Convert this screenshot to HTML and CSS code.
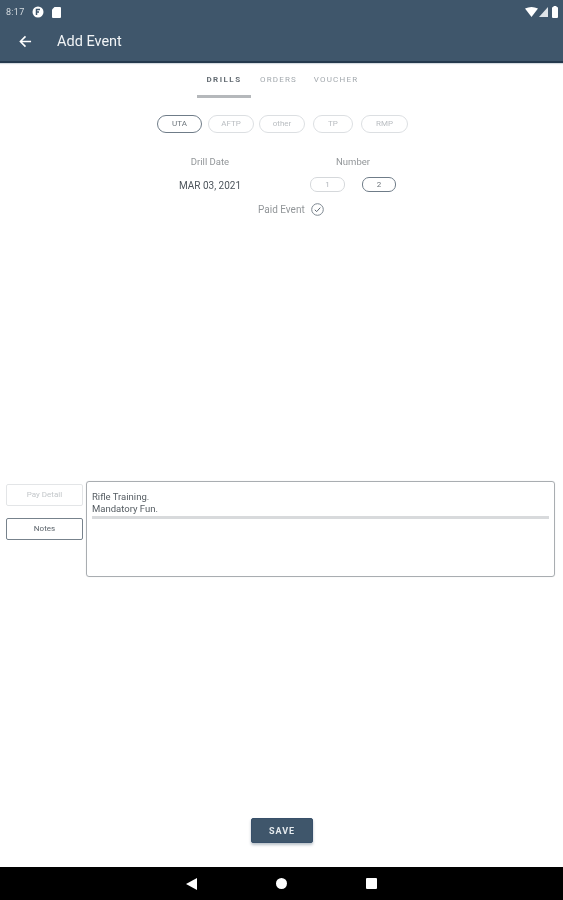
FILE: index.html
```html
<!DOCTYPE html>
<html>
<head>
    <meta charset="utf-8">
    <meta name="viewport" content="width=device-width, initial-scale=1">
    <title>Add Event</title>
    <link rel="stylesheet" href="styles.css">
</head>
<body>
    <header class="appbar">
        <div class="status">
            <span class="clock">8:17</span>
            <svg class="status-icon" width="12" height="12" viewBox="0 0 12 12">
                <circle cx="6" cy="6" r="5.5" fill="#fff"/>
                <path d="M4.5 9V3.5H8M4.5 6H7" fill="none" stroke="#3f566b" stroke-width="1.5"/>
            </svg>
            <svg class="status-icon" width="9" height="12" viewBox="0 0 9 12">
                <path d="M2.5 1H8a1 1 0 0 1 1 1v9a1 1 0 0 1-1 1H1a1 1 0 0 1-1-1V3.5z" fill="#fff"/>
            </svg>
            <span class="status-right">
                <svg width="13" height="10" viewBox="0 0 13 10"><path d="M0 1.5Q6.500-1.500 13 1.500L6.500 10z" fill="#fff"/></svg>
                <svg width="9" height="10" viewBox="0 0 9 10"><path d="M9 0V10H0z" fill="#dfe4e8"/></svg>
                <svg class="battery" width="6" height="12" viewBox="0 0 6 12"><path d="M1.500 1V0h3v1H5a1 1 0 0 1 1 1v9a1 1 0 0 1-1 1H1a1 1 0 0 1-1-1V2a1 1 0 0 1 1-1z" fill="#fff"/></svg>
            </span>
        </div>
        <div class="toolbar">
            <svg class="back" width="13" height="13" viewBox="0 0 14 14">
                <path d="M13 7H2M7 1.500 1.500 7 7 12.500" fill="none" stroke="#fff" stroke-width="1.700"/>
            </svg>
            <h1>Add Event</h1>
        </div>
    </header>

    <main class="content">
        <nav class="tabs">
            <a class="tab tab-active">DRILLS</a>
            <a class="tab tab-orders">ORDERS</a>
            <a class="tab tab-voucher">VOUCHER</a>
        </nav>

        <div class="types">
            <span class="chip chip-on chip-uta">UTA</span>
            <span class="chip chip-aftp">AFTP</span>
            <span class="chip chip-other">other</span>
            <span class="chip chip-tp">TP</span>
            <span class="chip chip-rmp">RMP</span>
        </div>

        <div class="drill">
            <div class="drill-date">
                <label>Drill Date</label>
                <div class="date-value">MAR 03, 2021</div>
            </div>
            <div class="drill-number">
                <label>Number</label>
                <div class="number-row">
                    <span class="num">1</span>
                    <span class="num num-on">2</span>
                </div>
            </div>
        </div>

        <div class="paid">
            <span>Paid Event</span>
            <svg width="13" height="13" viewBox="0 0 13 13">
                <circle cx="6.500" cy="6.500" r="5.800" fill="none" stroke="#7d8790" stroke-width="1"/>
                <path d="M3.800 6.800 5.700 8.600 9.300 4.600" fill="none" stroke="#5c6670" stroke-width="1"/>
            </svg>
        </div>

        <section class="details">
            <div class="side">
                <button class="side-btn">Pay Detail</button>
                <button class="side-btn side-on">Notes</button>
            </div>
            <div class="notes">
                <p>Rifle Training.<br>Mandatory Fun.</p>
                <div class="notes-line"></div>
            </div>
        </section>

        <div class="actions">
            <button class="save">SAVE</button>
        </div>
    </main>

    <footer class="navbar">
        <svg width="11" height="12" viewBox="0 0 11 12"><path d="M11 0V12L0 6z" fill="#fff"/></svg>
        <svg width="11" height="11" viewBox="0 0 11 11"><circle cx="5.500" cy="5.500" r="5.500" fill="#fff"/></svg>
        <svg width="11" height="11" viewBox="0 0 11 11"><rect width="11" height="11" rx="1" fill="#fff"/></svg>
    </footer>
</body>
</html>
```

FILE: styles.css
```css
* {
  box-sizing: border-box;
}

body {
  margin: 0;
  height: 900px;
  display: flex;
  flex-direction: column;
  background: #fff;
  font-family: Roboto, "Liberation Sans", sans-serif;
  color: #929699;
}

/* top bar */
.appbar {
  height: 63px;
  flex: none;
  background: #3f566b;
  border-bottom: 2px solid #24394d;
  box-shadow: 0 1px 1px #d5dbe0;
  color: #fff;
}
.status {
  height: 20px;
  padding: 3px 5px 0 6px;
  display: flex;
  align-items: center;
  font-size: 9px;
  filter: blur(0.4px);
}
.clock {
  width: 25px;
  color: #d5dbe0;
  letter-spacing: 0.3px;
}
.status-icon {
  margin-right: 7px;
  margin-left: 1px;
}
.status-right {
  margin-left: auto;
  display: flex;
  align-items: center;
  gap: 1px;
}
.battery {
  margin-left: 3px;
}
.toolbar {
  height: 40px;
  display: flex;
  align-items: center;
  padding: 2px 0 0 19px;
  filter: blur(0.3px);
}
.toolbar h1 {
  margin: 0 0 0 25px;
  font-size: 14.500px;
  font-weight: 400;
  color: #f1f4f6;
}

/* page body */
.content {
  flex: 1;
  display: flex;
  flex-direction: column;
  filter: blur(0.35px);
}

.tabs {
  display: flex;
  justify-content: center;
  height: 35px;
}
.tab {
  width: 55px;
  padding-top: 12px;
  text-align: center;
  font-size: 8px;
  letter-spacing: 1.200px;
  color: #a3a9ae;
}
.tab-active {
  width: 54px;
  color: #656d74;
  font-weight: 700;
  letter-spacing: 1.500px;
  border-bottom: 3px solid #b5b8bb;
}
.tab-voucher {
  width: 60px;
}

.types {
  margin-top: 17px;
  padding-left: 157px;
  display: flex;
  gap: 6px;
}
.chip {
  height: 18px;
  line-height: 16px;
  border: 1px solid #dcdfe2;
  border-radius: 9px;
  text-align: center;
  font-size: 8px;
  color: #b9bdc1;
}
.chip-on {
  border-color: #6f7c88;
  color: #6d757c;
}
.chip-uta { width: 45px; }
.chip-aftp { width: 46px; }
.chip-other { width: 46px; margin-left: -1px; }
.chip-tp { width: 40px; margin-left: 2px; }
.chip-rmp { width: 47px; margin-left: 2px; }

.drill {
  margin-top: 23px;
  display: flex;
  font-size: 9.500px;
}
.drill-date {
  width: 264px;
  padding-left: 156px;
  text-align: center;
}
.drill-number {
  width: 86px;
  margin-left: 46px;
}
.drill-number label {
  display: block;
  text-align: center;
}
.date-value {
  margin-top: 13px;
  font-size: 10px;
  color: #4d555c;
}
.number-row {
  margin-top: 10px;
  display: flex;
  gap: 17px;
}
.num {
  width: 35px;
  height: 15px;
  line-height: 13px;
  border: 1px solid #d5d8db;
  border-radius: 7px;
  text-align: center;
  font-size: 8px;
  color: #b0b5ba;
}
.num-on {
  width: 34px;
  border-color: #6f7c88;
  color: #6d757c;
}

.paid {
  margin-top: 11px;
  padding-left: 258px;
  display: flex;
  align-items: center;
  gap: 6px;
  font-size: 10px;
}

.details {
  margin-top: 265px;
  padding: 0 8px 0 6px;
  display: flex;
  gap: 3px;
}
.side {
  width: 77px;
  padding-top: 3px;
  display: flex;
  flex-direction: column;
  gap: 12px;
}
.side-btn {
  height: 22px;
  padding: 0 0 2px;
  background: #fff;
  border: 1px solid #e3e5e7;
  border-radius: 2px;
  font-family: inherit;
  font-size: 8px;
  color: #c3c7ca;
}
.side-on {
  border-color: #77828c;
  color: #5c646b;
}
.notes {
  flex: 1;
  height: 96px;
  padding: 9px 5px 0;
  border: 1px solid #a9adb1;
  border-radius: 3px;
  box-shadow: 0 0 1px #d0d3d6;
}
.notes p {
  margin: 0;
  font-size: 9.500px;
  line-height: 12px;
  color: #555c62;
}
.notes-line {
  margin-top: 1px;
  height: 3px;
  background: #d8dadc;
}

.actions {
  margin-top: auto;
  padding: 0 0 24px 251px;
}
.save {
  display: block;
  width: 62px;
  height: 25px;
  padding: 0;
  background: #3f566b;
  border: 1px solid #38506a;
  border-radius: 2px;
  box-shadow: 0 2px 3px #b9c1c8;
  font-family: inherit;
  font-size: 9px;
  font-weight: 700;
  letter-spacing: 1px;
  color: #e4e9ed;
}

/* android nav */
.navbar {
  height: 33px;
  flex: none;
  padding-left: 186px;
  display: flex;
  align-items: center;
  gap: 79px;
  background: #000;
}
```
